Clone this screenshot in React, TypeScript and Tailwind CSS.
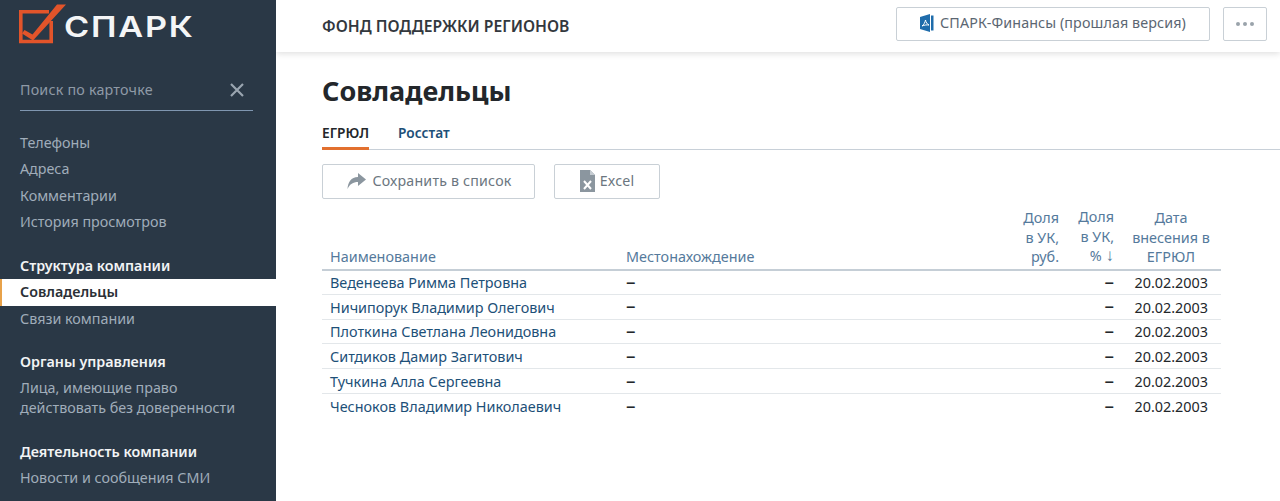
const font = { fontFamily: '"Noto Sans", sans-serif' };

const rows = [
  "Веденеева Римма Петровна",
  "Ничипорук Владимир Олегович",
  "Плоткина Светлана Леонидовна",
  "Ситдиков Дамир Загитович",
  "Тучкина Алла Сергеевна",
  "Чесноков Владимир Николаевич",
];

function Logo() {
  return (
    <div className="flex items-start h-[48px]">
      <svg width="48" height="42" viewBox="0 0 48 42" className="mt-[4px] shrink-0">
        <path d="M30 7.8H1.8V37.500H32.200V17" fill="none" stroke="#e2542a" strokeWidth="3.6" />
        <path d="M3 29.500L5.500 26 13.500 30.500 38 0.500H47L14 36.500z" fill="#e2542a" />
      </svg>
      <span className="ml-[-3px] mt-[9px] text-[29px] leading-[36px] font-semibold tracking-[1.5px] text-[#f4f5f6] scale-x-[1.18] origin-left" style={{ fontFamily: "Inter, sans-serif" }}>СПАРК</span>
    </div>
  );
}

function NavLink({ children }: { children: React.ReactNode }) {
  return <div className="pl-[20px] h-[26.4px] leading-[26.4px] text-[14.3px] text-[#a0adba]">{children}</div>;
}
function NavHead({ children }: { children: React.ReactNode }) {
  return <div className="pl-[20px] h-[26.4px] leading-[26.4px] text-[14.3px] font-semibold text-[#f2f4f5]">{children}</div>;
}

function Sidebar() {
  return (
    <aside className="w-[276px] shrink-0 h-[501px] overflow-hidden bg-[#2a3846]">
      <div className="pl-[19px] pt-0"><Logo /></div>
      <div className="mx-[20px] w-[233px] mt-[16px] h-[47px] border-b border-[#7f96b0] flex items-center justify-between pr-[8px] pt-[5px]">
        <span className="text-[14.3px] text-[#8f9aa6] tracking-[0.2px]">Поиск по карточке</span>
        <svg width="16" height="16" viewBox="0 0 16 16"><path d="M2 2l12 12M14 2L2 14" stroke="#9aa5b0" strokeWidth="2.200" /></svg>
      </div>
      <div className="mt-[19px]">
        <NavLink>Телефоны</NavLink>
        <NavLink>Адреса</NavLink>
        <NavLink>Комментарии</NavLink>
        <NavLink>История просмотров</NavLink>
      </div>
      <div className="mt-[17.500px]">
        <NavHead>Структура компании</NavHead>
        <div className="h-[26.4px] leading-[26.4px] pl-[18px] border-l-2 border-[#e8a24a] bg-white text-[14.3px] font-semibold text-[#2b3036]">Совладельцы</div>
        <NavLink>Связи компании</NavLink>
      </div>
      <div className="mt-[16.700px]">
        <NavHead>Органы управления</NavHead>
        <div className="pl-[20px] pt-[3px] text-[14.3px] leading-[19.5px] text-[#a0adba]">Лица, имеющие право<br />действовать без доверенности</div>
      </div>
      <div className="mt-[21.500px]">
        <NavHead>Деятельность компании</NavHead>
        <NavLink>Новости и сообщения СМИ</NavLink>
      </div>
    </aside>
  );
}

function Header() {
  return (
    <header className="h-[52px] bg-white shadow-[0_2px_6px_rgba(0,0,0,0.12)] flex items-center pl-[46px] pr-[13px] relative">
      <div className="text-[15.7px] font-semibold text-[#33383e] flex-1 pt-[1px]">ФОНД ПОДДЕРЖКИ РЕГИОНОВ</div>
      <div className="flex items-center gap-[13px] mb-[5px]">
        <button className="w-[314px] h-[34px] border border-[#c9d0d6] rounded-[2px] flex items-center justify-center gap-[4px] text-[14.3px] text-[#5b6672] tracking-[0.1px] pb-[2px]">
          <svg width="16" height="20" viewBox="0 0 16 20">
            <path d="M0 4L10 1v18L0 16z" fill="#1f6cab" />
            <path d="M11 2.500h2.500v15H11z" fill="#1f6cab" />
            <path d="M2 13c2-1.500 3-3.500 3.500-6 .5 2.500 1.500 4 3.500 5-2.500-.3-4.500 0-7 1z" fill="none" stroke="#fff" strokeWidth="1" />
          </svg>
          СПАРК-Финансы (прошлая версия)
        </button>
        <button className="w-[44px] h-[34px] border border-[#c9d0d6] rounded-[2px] flex items-center justify-center gap-[3px]">
          <span className="w-[4px] h-[4px] rounded-full bg-[#9aa3ab]" />
          <span className="w-[4px] h-[4px] rounded-full bg-[#9aa3ab]" />
          <span className="w-[4px] h-[4px] rounded-full bg-[#9aa3ab]" />
        </button>
      </div>
    </header>
  );
}

function Main() {
  return (
    <main className="flex-1 min-w-0 h-[501px] overflow-hidden bg-white">
      <Header />
      <div className="pl-[46px]">
        <h1 className="mt-[20px] text-[27px] leading-[38px] font-bold text-[#23272b]">Совладельцы</h1>
        <div className="mt-[11px] flex gap-[29px] h-[29px] border-b border-[#c8d0d8] text-[13.7px] font-semibold">
          <div className="h-[29px] leading-[24px] border-b-[3px] border-[#e2702f] text-[#23272b]">ЕГРЮЛ</div>
          <div className="leading-[24px] text-[#1d5078]">Росстат</div>
        </div>
        <div className="mt-[14px] flex gap-[19px]">
          <button className="w-[213px] h-[35px] border border-[#c9d0d6] rounded-[2px] flex items-center justify-center gap-[6px] pl-[1px] text-[14.2px] text-[#6b7680] tracking-[0.2px] pb-[1px]">
            <svg width="20" height="18" viewBox="0 0 20 18"><path d="M12 1l8 6.500-8 6.500v-4c-5 0-8 2-10.500 7C2 10 5 5 12 5z" fill="#8b969f" /></svg>
            Сохранить в список
          </button>
          <button className="w-[106px] h-[35px] border border-[#c9d0d6] rounded-[2px] flex items-center justify-center gap-[5px] text-[14.2px] text-[#6b7680] tracking-[0.2px] pb-[1px]">
            <svg width="15" height="22" viewBox="0 0 15 22"><path d="M0 0h10l5 5v17H0z" fill="#8b969f" /><path d="M10 0l5 5h-5z" fill="#c5ccd2" /><path d="M4 11l7 8M11 11l-7 8" stroke="#fff" strokeWidth="2" /></svg>
            Excel
          </button>
        </div>
        <table className="mt-[8px] w-[899px] table-fixed border-collapse text-[14.4px]">
          <colgroup>
            <col className="w-[304px]" />
            <col />
            <col className="w-[76px]" />
            <col className="w-[56px]" />
            <col className="w-[104px]" />
          </colgroup>
          <thead>
            <tr className="border-b-2 border-[#c5ced6] text-[#557a9c] align-bottom leading-[19.5px]">
              <th className="pl-[8px] pb-[2px] text-left font-normal">Наименование</th>
              <th className="pb-[2px] text-left font-normal">Местонахождение</th>
              <th className="pr-[2px] pb-[2px] text-right font-normal">Доля<br />в УК,<br />руб.</th>
              <th className="pr-[3px] pb-[2px] text-right font-normal"><div className="pb-[1px]">Доля<br />в УК,<br />% <span className="text-[17px] leading-none">↓</span></div></th>
              <th className="pb-[2px] text-center font-normal pl-[4px]">Дата<br />внесения в<br />ЕГРЮЛ</th>
            </tr>
          </thead>
          <tbody>
            {rows.map((name) => (
              <tr key={name} className="h-[24.8px] border-b border-[#e3e7ea] last:border-b-0 leading-[20px]">
                <td className="pl-[8px] pt-[2px] text-[#1d5078]">{name}</td>
                <td className="pt-[2px] text-[#23272b]"><span className="text-[19px] leading-none">–</span></td>
                <td />
                <td className="text-right pt-[2px] pr-[3px] text-[#23272b]"><span className="text-[19px] leading-none">–</span></td>
                <td className="text-right pt-[2px] pr-[13px] text-[#23272b]">20.02.2003</td>
              </tr>
            ))}
          </tbody>
        </table>
      </div>
    </main>
  );
}

export default function App() {
  return (
    <div className="flex w-[1280px] h-[501px] overflow-hidden" style={font}>
      <Sidebar />
      <Main />
    </div>
  );
}
